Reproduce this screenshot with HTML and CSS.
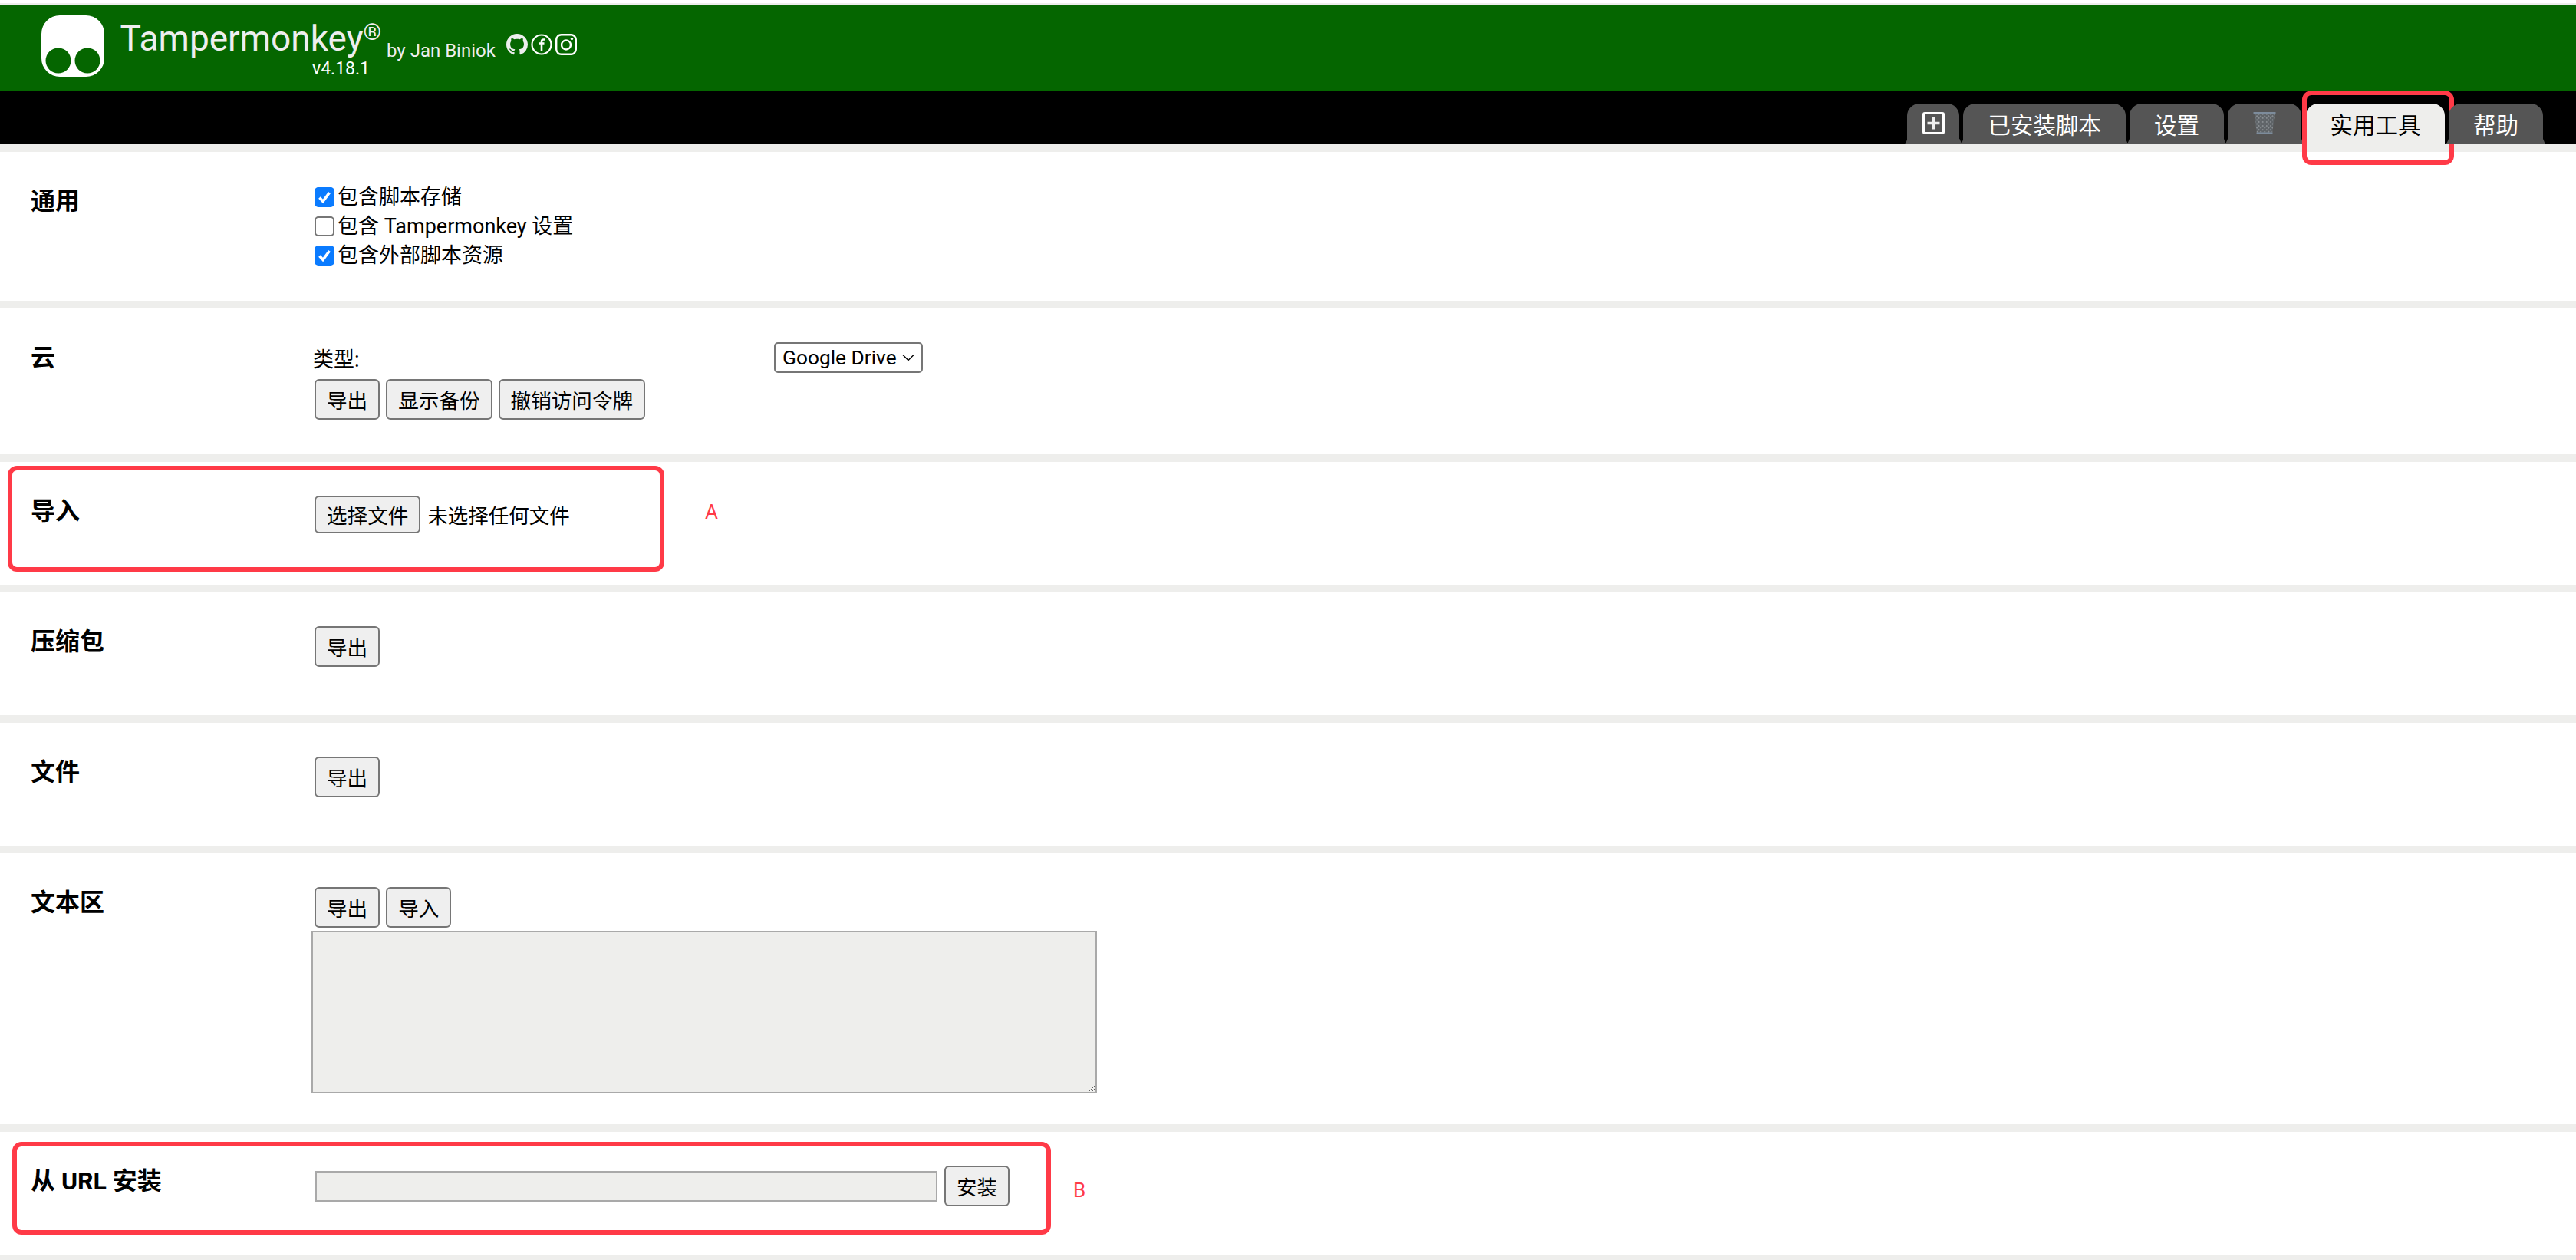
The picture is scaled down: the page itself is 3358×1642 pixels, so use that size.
FILE: index.html
```html
<!DOCTYPE html>
<html lang="zh-CN">
<head>
<meta charset="utf-8">
<title>Tampermonkey 实用工具</title>
<link rel="stylesheet" href="styles.css">
</head>
<body>
<div class="page">
  <header class="head">
    <svg class="logo" viewBox="0 0 82 80"><path fill-rule="evenodd" fill="#fff" d="M24 0H58A24 24 0 0 1 82 24V56A24 24 0 0 1 58 80H24A24 24 0 0 1 0 56V24A24 24 0 0 1 24 0ZM22 42.500A16.500 16.500 0 1 0 22 75.500A16.500 16.500 0 1 0 22 42.500ZM60 42.500A16.500 16.500 0 1 0 60 75.500A16.500 16.500 0 1 0 60 42.500Z"/></svg>
    <div class="title-col">
      <div class="title">Tampermonkey<sup class="reg">®</sup></div>
      <div class="version">v4.18.1</div>
    </div>
    <div class="by">by Jan Biniok</div>
    <div class="socials">
      <svg class="ic-gh" viewBox="0 0 16 16"><path fill="#eee" d="M8 0C3.580 0 0 3.580 0 8c0 3.540 2.290 6.530 5.470 7.590.4.070.55-.17.55-.38 0-.19-.01-.82-.01-1.490-2.010.37-2.530-.49-2.690-.94-.09-.23-.48-.94-.82-1.130-.28-.15-.68-.52-.01-.53.63-.01 1.080.58 1.230.82.720 1.210 1.870.870 2.330.660.070-.52.280-.870.510-1.070-1.780-.2-3.640-.89-3.640-3.950 0-.870.310-1.590.820-2.150-.08-.2-.36-1.020.08-2.120 0 0 .67-.21 2.200.820.640-.18 1.320-.27 2-.27s1.360.09 2 .27c1.530-1.040 2.200-.82 2.200-.82.440 1.100.160 1.920.080 2.120.510.560.820 1.270.820 2.150 0 3.070-1.870 3.750-3.650 3.950.290.250.540.730.540 1.480 0 1.070-.01 1.930-.01 2.200 0 .21.150.46.550.38A8.010 8.010 0 0 0 16 8c0-4.420-3.580-8-8-8z"/></svg>
      <svg class="ic-fb" viewBox="0 0 28 28"><circle cx="14" cy="14" r="12.500" fill="none" stroke="#fff" stroke-width="2.200"/><path fill="none" stroke="#fff" stroke-width="2.600" d="M18 7.500h-1.500c-1.600 0-2.500 1-2.500 2.600V22M10.500 12.500H17.500"/></svg>
      <svg class="ic-ig" viewBox="0 0 28 28"><rect x="1.200" y="1.200" width="25.600" height="25.600" rx="6.500" fill="none" stroke="#fff" stroke-width="2.400"/><circle cx="14" cy="14.500" r="6" fill="none" stroke="#fff" stroke-width="2.400"/><circle cx="21.500" cy="6.500" r="1.700" fill="#fff"/></svg>
    </div>
  </header>
  <nav class="tabs">
    <div class="tab tab-plus"><svg class="ic-plus" viewBox="0 0 29 29"><rect x="1.500" y="1.500" width="26" height="26" rx="1.500" fill="none" stroke="#fff" stroke-width="3"/><path stroke="#eee" stroke-width="3.600" d="M6.500 14.500h16M14.500 6.500v16"/></svg></div>
    <div class="tab">已安装脚本</div>
    <div class="tab">设置</div>
    <div class="tab tab-trash"><svg class="ic-trash" viewBox="0 0 30 30"><defs><pattern id="mesh" width="3.600" height="3.600" patternUnits="userSpaceOnUse" patternTransform="rotate(45)"><rect width="3.600" height="3.600" fill="#5f6468"/><rect width="1.700" height="1.700" fill="#8d9296"/></pattern></defs><path fill="url(#mesh)" d="M1.500 2H28.500L25 28.500H5Z"/><path stroke="#7d8c9c" stroke-width="2" d="M0.500 2H29.500M4.500 28.500H25.500"/></svg></div>
    <div class="tab tab-active">实用工具</div>
    <div class="tab">帮助</div>
  </nav>
  <main class="rows">
    <section class="row row-general">
      <div class="label">通用</div>
      <div class="body">
        <label class="check"><input type="checkbox" class="box" checked>包含脚本存储</label>
        <label class="check"><input type="checkbox" class="box">包含 Tampermonkey 设置</label>
        <label class="check"><input type="checkbox" class="box" checked>包含外部脚本资源</label>
      </div>
    </section>
    <section class="row row-cloud">
      <div class="label">云</div>
      <div class="body">
        <div class="type-line"><span class="type-name">类型:</span><select class="sel"><option>Google Drive</option></select></div>
        <div class="btns"><button class="btn">导出</button><button class="btn">显示备份</button><button class="btn">撤销访问令牌</button></div>
      </div>
    </section>
    <section class="row row-import">
      <div class="label">导入</div>
      <div class="body">
        <div class="btns"><button class="btn btn-file">选择文件</button><span class="file-none">未选择任何文件</span></div>
      </div>
      <div class="mark mark-a"></div><div class="note note-a">A</div>
    </section>
    <section class="row">
      <div class="label">压缩包</div>
      <div class="body"><div class="btns"><button class="btn">导出</button></div></div>
    </section>
    <section class="row">
      <div class="label">文件</div>
      <div class="body"><div class="btns"><button class="btn">导出</button></div></div>
    </section>
    <section class="row row-text">
      <div class="label">文本区</div>
      <div class="body">
        <div class="btns"><button class="btn">导出</button><button class="btn">导入</button></div>
        <textarea class="area"></textarea>
      </div>
    </section>
    <section class="row">
      <div class="label">从 URL 安装</div>
      <div class="body">
        <div class="btns"><input class="url" type="text"><button class="btn">安装</button></div>
      </div>
      <div class="mark mark-b"></div><div class="note note-b">B</div>
    </section>
  </main>
</div>
</body>
</html>
```
FILE: styles.css
```css
*, *::before, *::after { box-sizing: border-box; }
html, body { margin: 0; padding: 0; }
body {
  background: #eeeeec;
  color: #000;
  font-family: Roboto, "Noto Sans CJK SC", sans-serif;
  font-size: 27px;
  overflow: hidden;
  height: 1642px;
}
.page { border-top: 4px solid #fff; padding-top: 2px; }
.head {
  height: 112px;
  background: #056600;
  display: flex;
  align-items: flex-start;
  padding: 14px 0 0 54px;
  color: #eee;
}
.logo { width: 82px; height: 80px; flex: none; }
.title-col {
  margin-left: 24px;
  width: 337px;
  display: flex;
  flex-direction: column;
  align-items: flex-end;
}
.title { font-size: 46px; line-height: 56px; white-space: nowrap; margin-top: 2px; }
.reg { font-size: 30px; line-height: 0; vertical-align: 14px; }
.version { font-size: 23px; line-height: 24px; padding-right: 15px; color: #fff; }
.by { font-size: 24px; line-height: 30px; margin: 31px 0 0 7px; white-space: nowrap; }
.socials { display: flex; align-items: center; gap: 4px; margin: 24px 0 0 14px; }
.ic-gh, .ic-fb, .ic-ig { width: 28px; height: 28px; display: block; }
.tabs {
  height: 70px;
  background: #000;
  display: flex;
  justify-content: flex-end;
  align-items: flex-start;
  gap: 5px;
  padding: 17px 43px 0 0;
  position: relative;
  z-index: 1;
}
.tab {
  position: relative;
  height: 53px;
  padding: 0 32px;
  background: #555;
  color: #fff;
  font-size: 29.500px;
  line-height: 59px;
  border-radius: 16px 16px 0 0;
  white-space: nowrap;
}
.tab::before {
  content: "";
  position: absolute;
  left: -3px;
  right: -3px;
  bottom: 0;
  height: 7px;
  background: #555;
  clip-path: polygon(0 100%, 3px 0, calc(100% - 3px) 0, 100% 100%);
}
.tab-plus { width: 68px; padding: 11px 0 0 20px; }
.tab-trash { width: 96px; padding: 10px 0 0 33px; margin-right: 1px; }
.ic-plus, .ic-trash { display: block; width: 29px; height: 29px; }
.ic-trash { width: 30px; height: 30px; }
.tab-active {
  height: 63px;
  background: #eeeeec;
  color: #000;
  width: 181px;
  padding: 0;
  text-align: center;
}
.tab-active::before { display: none; }
.tab-active::after {
  content: "";
  position: absolute;
  left: -5px;
  top: -17px;
  width: 198px;
  height: 97px;
  border: 6px solid #ff3a47;
  border-radius: 12px;
}
.rows { padding-top: 10px; display: flex; flex-direction: column; gap: 10px; }
.row {
  position: relative;
  display: flex;
  background: #fff;
  padding: 44px 0 63px;
}
.label {
  width: 406px;
  flex: none;
  padding: 1px 0 0 40px;
  font-weight: 700;
  font-size: 32px;
  line-height: 38px;
}
.body { flex: 1; min-width: 0; }
.row-general { padding: 40px 0 40px; }
.row-general .label { padding-top: 5px; }
.row-cloud { padding-bottom: 45px; }
.row-import { padding-bottom: 67px; }
.row-text { padding-bottom: 40px; }
.check { display: flex; align-items: center; height: 38px; line-height: 38px; white-space: pre; }
.box {
  appearance: none;
  width: 26px;
  height: 26px;
  margin: 0 4px 0 4px;
  border: 2px solid #767676;
  border-radius: 5px;
  background: #fff;
  flex: none;
}
.box:checked {
  border: 0;
  background: #0a7bff url("data:image/svg+xml,%3Csvg xmlns='http://www.w3.org/2000/svg' viewBox='0 0 26 26'%3E%3Cpath fill='none' stroke='%23fff' stroke-width='3.600' d='M6.500 13.500l4.500 5 8.500-11.500'/%3E%3C/svg%3E") center / 26px 26px no-repeat;
}
.type-line { display: flex; align-items: center; height: 40px; margin-bottom: 8px; }
.type-name { width: 603px; padding-left: 2px; flex: none; }
.sel {
  appearance: none;
  width: 194px;
  height: 40px;
  font: 26.300px Roboto, sans-serif;
  color: #000;
  padding: 0 0 0 9px;
  border: 2px solid #767676;
  border-radius: 5px;
  background: #fff url("data:image/svg+xml,%3Csvg xmlns='http://www.w3.org/2000/svg' viewBox='0 0 16 10'%3E%3Cpath fill='none' stroke='%23000' stroke-width='1.400' d='M1 1.500l7 7 7-7'/%3E%3C/svg%3E") right 9px center / 16px 10px no-repeat;
}
.btns { display: flex; align-items: center; gap: 8px; padding-left: 4px; }
.btn {
  height: 53px;
  padding: 0 14px;
  font: 26.600px Roboto, "Noto Sans CJK SC", sans-serif;
  color: #000;
  background: #efefef;
  border: 2px solid #767676;
  border-radius: 6px;
  white-space: nowrap;
}
.btn-file { height: 49px; }
.file-none { margin-left: 1px; font-size: 26.500px; }
.area {
  display: block;
  width: 1024px;
  height: 212px;
  margin-top: 4px;
  background: #eeeeec;
  border: 2px solid #a9a9a9;
  outline: 0;
}
.url {
  width: 811px;
  height: 40px;
  margin: 0 1px 0 1px;
  background: #eeeeec;
  border: 2px solid #a9a9a9;
  outline: 0;
}
.mark {
  position: absolute;
  border: 6px solid #ff3a47;
  border-radius: 12px;
}
.mark-a { left: 10px; top: 5px; width: 856px; height: 138px; }
.mark-b { left: 16px; top: 13px; width: 1354px; height: 121px; }
.note { position: absolute; color: #ff3a47; font-size: 26px; line-height: 30px; font-weight: 400; }
.note-a { left: 919px; top: 50px; }
.note-b { left: 1399px; top: 61px; }
```
